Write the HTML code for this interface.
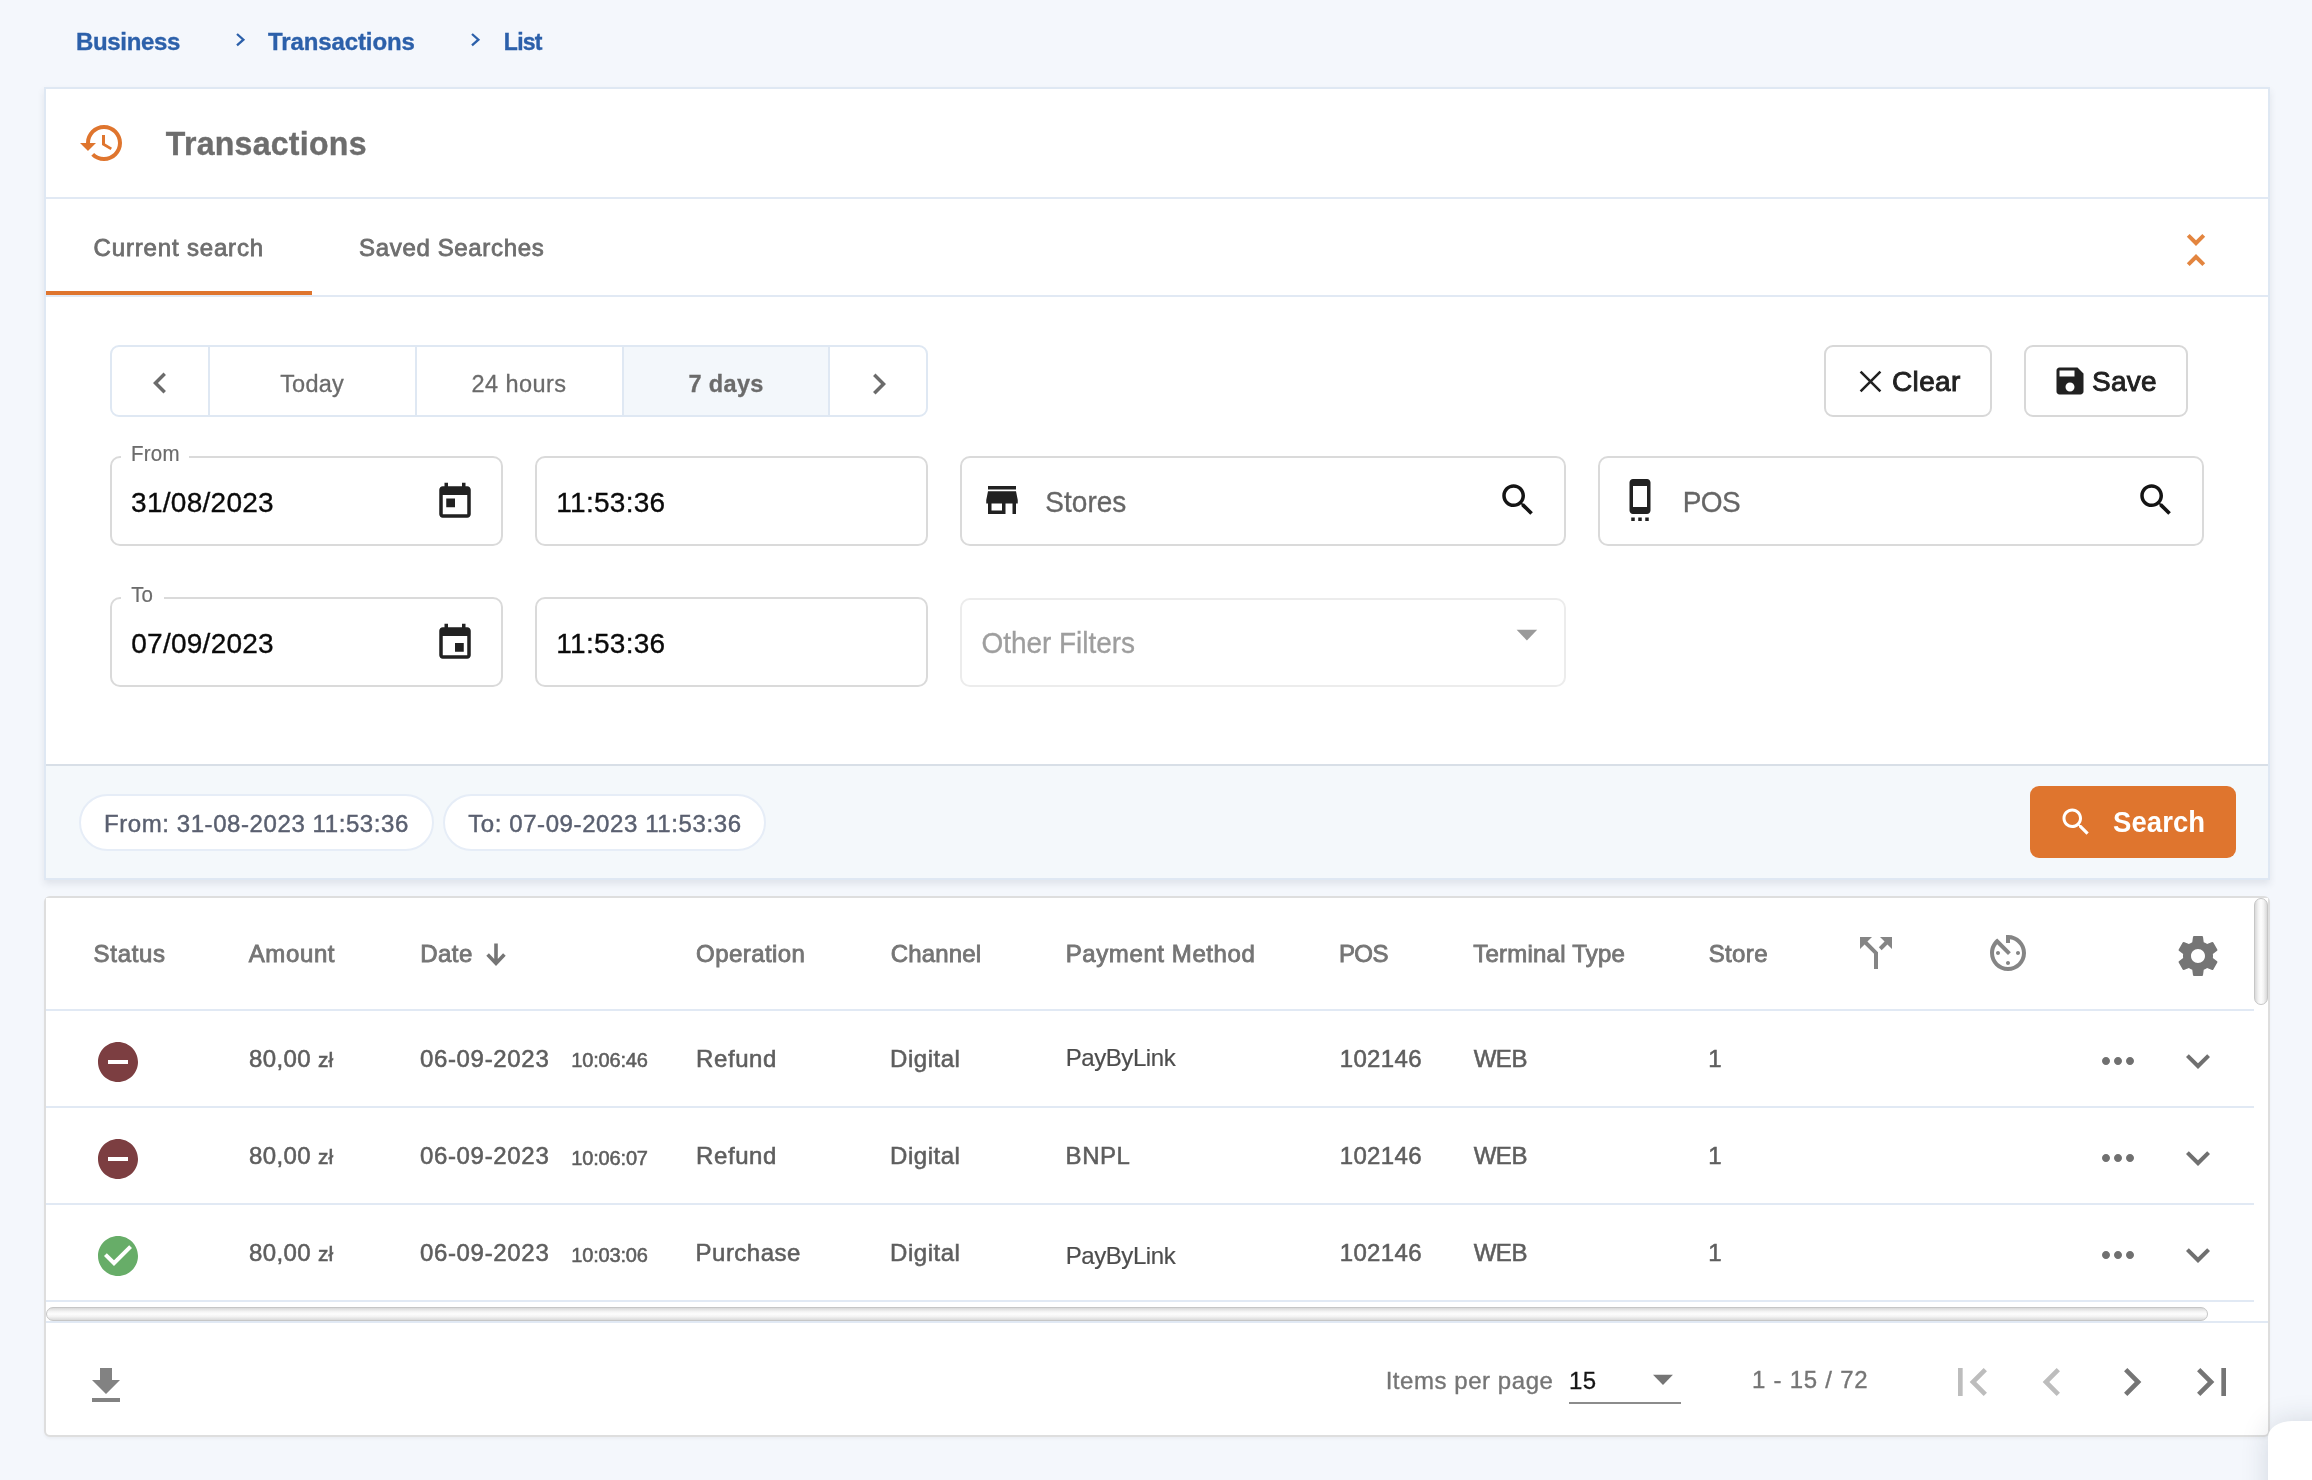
<!DOCTYPE html>
<html lang="en">
<head>
<meta charset="utf-8">
<title>Transactions</title>
<style>
html,body{margin:0;padding:0}
body{width:2312px;height:1480px;overflow:hidden;position:relative;background:#f4f7fc;font-family:"Liberation Sans",sans-serif}
.a,.t,svg{position:absolute}
.t{white-space:pre;line-height:1}
.hl{position:absolute;height:2px;background:#e1e9f4}
.fld{position:absolute;box-sizing:border-box;height:90px;border:2px solid #dadada;border-radius:10px;background:#fff}
.btn{position:absolute;box-sizing:border-box;height:72px;border:2px solid #d8d8d8;border-radius:9px;background:#fff}
.chip{position:absolute;box-sizing:border-box;height:57px;border:2px solid #e6edf7;border-radius:29px;background:#fff}
</style>
</head>
<body>

<!-- ===== search card ===== -->
<div class="a" style="left:44px;top:87px;width:2226px;height:793px;box-sizing:border-box;border:2px solid #dfe8f3;background:#fff;box-shadow:0 4px 7px rgba(50,60,80,.10)"></div>
<div class="hl" style="left:46px;top:197px;width:2222px"></div>
<div class="hl" style="left:46px;top:295px;width:2222px"></div>
<div class="a" style="left:46px;top:291px;width:266px;height:4px;background:#df752e"></div>
<!-- card footer -->
<div class="a" style="left:46px;top:764px;width:2222px;height:114px;box-sizing:border-box;border-top:2px solid #d8dfe7;background:#f4f8fb"></div>

<!-- quick range group -->
<div class="a" style="left:110px;top:345px;width:818px;height:72px;box-sizing:border-box;border:2px solid #dfe8f3;border-radius:9px;background:#fff;overflow:hidden">
  <div class="a" style="left:512px;top:0;width:204px;height:68px;background:#f3f7fb"></div>
  <div class="a" style="left:96px;top:0;width:2px;height:68px;background:#dfe8f3"></div>
  <div class="a" style="left:303px;top:0;width:2px;height:68px;background:#dfe8f3"></div>
  <div class="a" style="left:510px;top:0;width:2px;height:68px;background:#dfe8f3"></div>
  <div class="a" style="left:716px;top:0;width:2px;height:68px;background:#dfe8f3"></div>
</div>

<!-- Clear / Save -->
<div class="btn" style="left:1824px;top:345px;width:168px"></div>
<div class="btn" style="left:2024px;top:345px;width:164px"></div>

<!-- form fields -->
<div class="fld" style="left:110px;top:456px;width:393px"></div>
<div class="a" style="left:121px;top:455px;width:68px;height:4px;background:#fff"></div>
<div class="fld" style="left:535px;top:456px;width:393px"></div>
<div class="fld" style="left:960px;top:456px;width:606px"></div>
<div class="fld" style="left:1598px;top:456px;width:606px"></div>
<div class="fld" style="left:110px;top:597px;width:393px"></div>
<div class="a" style="left:121px;top:596px;width:43px;height:4px;background:#fff"></div>
<div class="fld" style="left:535px;top:597px;width:393px"></div>
<div class="fld" style="left:960px;top:598px;width:606px;height:89px;border-color:#ececec"></div>

<!-- chips -->
<div class="chip" style="left:78.5px;top:793.5px;width:355px"></div>
<div class="chip" style="left:442.5px;top:793.5px;width:323.5px"></div>

<!-- search button -->
<div class="a" style="left:2030px;top:786px;width:206px;height:72px;border-radius:9px;background:#df752e"></div>

<!-- ===== table card ===== -->
<div class="a" style="left:44px;top:896px;width:2226px;height:541px;box-sizing:border-box;border:2px solid #dedede;border-radius:6px;background:#fff;box-shadow:0 2px 3px rgba(0,0,0,.04)"></div>
<div class="a" style="left:46px;top:898px;width:12px;height:12px;background:#fff"></div>
<div class="a" style="left:2256px;top:898px;width:12px;height:12px;background:#fff"></div>
<div class="hl" style="left:46px;top:1009px;width:2208px"></div>
<div class="hl" style="left:46px;top:1106px;width:2208px"></div>
<div class="hl" style="left:46px;top:1203px;width:2208px"></div>
<div class="hl" style="left:46px;top:1300px;width:2208px"></div>
<div class="hl" style="left:46px;top:1321px;width:2222px"></div>
<!-- vertical scrollbar thumb -->
<div class="a" style="left:2254px;top:898px;width:14px;height:107px;box-sizing:border-box;border:1px solid #c6c6c6;border-radius:7px;background:linear-gradient(90deg,#d9d9d9 0%,#f4f4f4 30%,#fdfdfd 50%,#f4f4f4 70%,#d9d9d9 100%)"></div>
<!-- horizontal scrollbar thumb -->
<div class="a" style="left:46px;top:1307px;width:2162px;height:14px;box-sizing:border-box;border:1px solid #c6c6c6;border-radius:7px;background:linear-gradient(180deg,#d9d9d9 0%,#f4f4f4 30%,#fdfdfd 50%,#f4f4f4 70%,#d9d9d9 100%)"></div>
<!-- paginator select underline -->
<div class="a" style="left:1569px;top:1402px;width:112px;height:2px;background:#8c8c8c"></div>

<!-- floating element bottom-right -->
<div class="a" style="left:2268px;top:1421px;width:90px;height:100px;border-radius:24px 0 0 0 / 16px 0 0 0;background:#fff;box-shadow:0 0 28px rgba(30,40,60,.15)"></div>

<svg style="left:78.00px;top:119.00px" width="48" height="48" viewBox="0 0 24 24"><path fill="#df752e" d="M13 3c-4.97 0-9 4.03-9 9H1l3.89 3.89.07.14L9 12H6c0-3.87 3.13-7 7-7s7 3.13 7 7-3.13 7-7 7c-1.93 0-3.68-.79-4.94-2.06l-1.42 1.42C8.27 19.99 10.51 21 13 21c4.97 0 9-4.03 9-9s-4.03-9-9-9zm-1 5v5l4.28 2.54.72-1.21-3.5-2.08V8H12z"/></svg>
<svg style="left:2172.20px;top:226.00px" width="48" height="48" viewBox="0 0 24 24"><path fill="#e3853f" d="M7.41 18.59L8.83 20 12 16.83 15.17 20l1.41-1.41L12 14l-4.59 4.59zm9.18-13.18L15.17 4 12 7.17 8.83 4 7.41 5.41 12 10l4.59-4.59z"/></svg>
<svg style="left:234.00px;top:32.00px" width="14" height="16" viewBox="0 0 14 16"><polyline points="3,2.0 9.4,7.7 3,13.4" fill="none" stroke="#2c60aa" stroke-width="2.3"/></svg>
<svg style="left:468.50px;top:32.00px" width="14" height="16" viewBox="0 0 14 16"><polyline points="3,2.0 9.4,7.7 3,13.4" fill="none" stroke="#2c60aa" stroke-width="2.3"/></svg>
<svg style="left:139.10px;top:362.20px" width="42" height="42" viewBox="0 0 24 24"><path fill="#6b6b6b" d="M15.41 7.41L14 6l-6 6 6 6 1.41-1.41L10.83 12z"/></svg>
<svg style="left:857.50px;top:362.60px" width="42" height="42" viewBox="0 0 24 24"><path fill="#6b6b6b" d="M10 6L8.59 7.41 13.17 12l-4.58 4.59L10 18l6-6z"/></svg>
<svg style="left:1856.00px;top:367.00px" width="30" height="30" viewBox="0 0 30 30"><path d="M4.6,4.6 L24.4,24.4 M24.4,4.6 L4.6,24.4" fill="none" stroke="#212121" stroke-width="2.6"/></svg>
<svg style="left:2052.20px;top:363.00px" width="36" height="36" viewBox="0 0 24 24"><path fill="#212121" d="M17 3H5c-1.11 0-2 .9-2 2v14c0 1.1.89 2 2 2h14c1.1 0 2-.9 2-2V7l-4-4zm-5 16c-1.66 0-3-1.34-3-3s1.34-3 3-3 3 1.34 3 3-1.34 3-3 3zm3-10H5V5h10v4z"/></svg>
<svg style="left:434.15px;top:481.15px" width="42" height="42" viewBox="0 0 24 24"><path fill="#212121" d="M19 3h-1V1h-2v2H8V1H6v2H5c-1.11 0-1.99.9-1.99 2L3 19c0 1.1.89 2 2 2h14c1.1 0 2-.9 2-2V5c0-1.1-.9-2-2-2zm0 16H5V8h14v11zM7 10h5v5H7z"/></svg>
<svg style="left:434.15px;top:622.15px" width="42" height="42" viewBox="0 0 24 24"><path fill="#212121" d="M17 12h-5v5h5v-5zM16 1v2H8V1H6v2H5c-1.11 0-1.99.9-1.99 2L3 19c0 1.1.89 2 2 2h14c1.1 0 2-.9 2-2V5c0-1.1-.9-2-2-2h-1V1h-2zm3 18H5V8h14v11z"/></svg>
<svg style="left:981.25px;top:479.20px" width="42" height="42" viewBox="0 0 24 24"><path fill="#212121" d="M20 4H4v2h16V4zm1 10v-2l-1-5H4l-1 5v2h1v6h10v-6h4v6h2v-6h1zm-9 4H6v-4h6v4z"/></svg>
<svg style="left:1497.15px;top:479.00px" width="42" height="42" viewBox="0 0 24 24"><path fill="#141414" d="M15.5 14h-.79l-.28-.27C15.41 12.59 16 11.11 16 9.5 16 5.91 13.09 3 9.5 3S3 5.91 3 9.5 5.91 16 9.5 16c1.61 0 3.09-.59 4.23-1.57l.27.28v.79l5 4.99L20.49 19l-4.99-5zm-6 0C7.01 14 5 11.99 5 9.5S7.01 5 9.5 5 14 7.01 14 9.5 11.99 14 9.5 14z"/></svg>
<svg style="left:1618.80px;top:478.60px" width="42" height="42" viewBox="0 0 24 24"><path fill="#212121" d="M7 24h2v-2H7v2zm4 0h2v-2h-2v2zm4 0h2v-2h-2v2zM16 .01L8 0C6.9 0 6 .9 6 2v16c0 1.1.9 2 2 2h8c1.1 0 2-.9 2-2V2c0-1.1-.9-1.99-2-1.99zM16 16H8V4h8v12z"/></svg>
<svg style="left:2134.75px;top:479.00px" width="42" height="42" viewBox="0 0 24 24"><path fill="#141414" d="M15.5 14h-.79l-.28-.27C15.41 12.59 16 11.11 16 9.5 16 5.91 13.09 3 9.5 3S3 5.91 3 9.5 5.91 16 9.5 16c1.61 0 3.09-.59 4.23-1.57l.27.28v.79l5 4.99L20.49 19l-4.99-5zm-6 0C7.01 14 5 11.99 5 9.5S7.01 5 9.5 5 14 7.01 14 9.5 11.99 14 9.5 14z"/></svg>
<svg style="left:1514.00px;top:627.00px" width="26" height="16" viewBox="0 0 26 16"><polygon points="2.6,2.8 23.2,2.8 12.9,13.4" fill="#9a9a9a"/></svg>
<svg style="left:2057.60px;top:804.30px" width="36" height="36" viewBox="0 0 24 24"><path fill="#fff" d="M15.5 14h-.79l-.28-.27C15.41 12.59 16 11.11 16 9.5 16 5.91 13.09 3 9.5 3S3 5.91 3 9.5 5.91 16 9.5 16c1.61 0 3.09-.59 4.23-1.57l.27.28v.79l5 4.99L20.49 19l-4.99-5zm-6 0C7.01 14 5 11.99 5 9.5S7.01 5 9.5 5 14 7.01 14 9.5 11.99 14 9.5 14z"/></svg>
<svg style="left:484.00px;top:940.00px" width="24" height="28" viewBox="0 0 24 28"><path d="M12,3.4 V23 M3.6,14.6 L12,23.4 L20.4,14.6" fill="none" stroke="#757575" stroke-width="3.6" stroke-linejoin="miter"/></svg>
<svg style="left:1851.50px;top:929.10px" width="48" height="48" viewBox="0 0 24 24"><path fill="#858585" d="M14 4l2.29 2.29-2.88 2.88 1.42 1.42 2.88-2.88L20 10V4zm-4 0H4v6l2.29-2.29 4.71 4.7V20h2v-8.41l-5.29-5.3z"/></svg>
<svg style="left:1984.30px;top:929.00px" width="48" height="48" viewBox="0 0 24 24"><path fill="#858585" d="M11 17c0 .55.45 1 1 1s1-.45 1-1-.45-1-1-1-1 .45-1 1zm0-14v4h2V5.08c3.39.49 6 3.39 6 6.92 0 3.87-3.13 7-7 7s-7-3.13-7-7c0-1.68.59-3.22 1.58-4.42L12 13l1.41-1.41-6.8-6.8v.02C4.42 6.45 3 9.05 3 12c0 4.97 4.02 9 9 9 4.97 0 9-4.03 9-9s-4.03-9-9-9h-1zm7 9c0-.55-.45-1-1-1s-1 .45-1 1 .45 1 1 1 1-.45 1-1zM6 12c0 .55.45 1 1 1s1-.45 1-1-.45-1-1-1-1 .45-1 1z"/></svg>
<svg style="left:2173.60px;top:931.90px" width="48" height="48" viewBox="0 0 24 24"><path fill="#757575" d="M19.43 12.98c.04-.32.07-.64.07-.98s-.03-.66-.07-.98l2.11-1.65c.19-.15.24-.42.12-.64l-2-3.46c-.12-.22-.39-.3-.61-.22l-2.49 1c-.52-.4-1.08-.73-1.69-.98l-.38-2.65C14.46 2.18 14.25 2 14 2h-4c-.25 0-.46.18-.49.42l-.38 2.65c-.61.25-1.17.59-1.69.98l-2.49-1c-.23-.09-.49 0-.61.22l-2 3.46c-.13.22-.07.49.12.64l2.11 1.65c-.04.32-.07.65-.07.98s.03.66.07.98l-2.11 1.65c-.19.15-.24.42-.12.64l2 3.46c.12.22.39.3.61.22l2.49-1c.52.4 1.08.73 1.69.98l.38 2.65c.03.24.24.42.49.42h4c.25 0 .46-.18.49-.42l.38-2.65c.61-.25 1.17-.59 1.69-.98l2.49 1c.23.09.49 0 .61-.22l2-3.46c.12-.22.07-.49-.12-.64l-2.11-1.65zM12 15.5c-1.93 0-3.5-1.57-3.5-3.5s1.57-3.5 3.5-3.5 3.5 1.57 3.5 3.5-1.57 3.5-3.5 3.5z"/></svg>
<svg style="left:94.00px;top:1038.00px" width="48" height="48" viewBox="0 0 24 24"><path fill="#7c3e41" d="M12 2C6.48 2 2 6.48 2 12s4.48 10 10 10 10-4.48 10-10S17.52 2 12 2zm5 11H7v-2h10v2z"/></svg>
<svg style="left:2093.70px;top:1036.90px" width="48" height="48" viewBox="0 0 24 24"><path fill="#707070" d="M6 10c-1.1 0-2 .9-2 2s.9 2 2 2 2-.9 2-2-.9-2-2-2zm12 0c-1.1 0-2 .9-2 2s.9 2 2 2 2-.9 2-2-.9-2-2-2zm-6 0c-1.1 0-2 .9-2 2s.9 2 2 2 2-.9 2-2-.9-2-2-2z"/></svg>
<svg style="left:2173.90px;top:1036.90px" width="48" height="48" viewBox="0 0 24 24"><path fill="#707070" d="M16.59 8.59L12 13.17 7.41 8.59 6 10l6 6 6-6z"/></svg>
<svg style="left:94.00px;top:1135.00px" width="48" height="48" viewBox="0 0 24 24"><path fill="#7c3e41" d="M12 2C6.48 2 2 6.48 2 12s4.48 10 10 10 10-4.48 10-10S17.52 2 12 2zm5 11H7v-2h10v2z"/></svg>
<svg style="left:2093.70px;top:1133.90px" width="48" height="48" viewBox="0 0 24 24"><path fill="#707070" d="M6 10c-1.1 0-2 .9-2 2s.9 2 2 2 2-.9 2-2-.9-2-2-2zm12 0c-1.1 0-2 .9-2 2s.9 2 2 2 2-.9 2-2-.9-2-2-2zm-6 0c-1.1 0-2 .9-2 2s.9 2 2 2 2-.9 2-2-.9-2-2-2z"/></svg>
<svg style="left:2173.90px;top:1133.90px" width="48" height="48" viewBox="0 0 24 24"><path fill="#707070" d="M16.59 8.59L12 13.17 7.41 8.59 6 10l6 6 6-6z"/></svg>
<svg style="left:94.00px;top:1232.00px" width="48" height="48" viewBox="0 0 24 24"><path fill="#67ad68" d="M12 2C6.48 2 2 6.48 2 12s4.48 10 10 10 10-4.48 10-10S17.52 2 12 2zm-2 15l-5-5 1.41-1.41L10 14.17l7.59-7.59L19 8l-9 9z"/></svg>
<svg style="left:2093.70px;top:1230.90px" width="48" height="48" viewBox="0 0 24 24"><path fill="#707070" d="M6 10c-1.1 0-2 .9-2 2s.9 2 2 2 2-.9 2-2-.9-2-2-2zm12 0c-1.1 0-2 .9-2 2s.9 2 2 2 2-.9 2-2-.9-2-2-2zm-6 0c-1.1 0-2 .9-2 2s.9 2 2 2 2-.9 2-2-.9-2-2-2z"/></svg>
<svg style="left:2173.90px;top:1230.90px" width="48" height="48" viewBox="0 0 24 24"><path fill="#707070" d="M16.59 8.59L12 13.17 7.41 8.59 6 10l6 6 6-6z"/></svg>
<svg style="left:82.10px;top:1361.90px" width="48" height="48" viewBox="0 0 24 24"><path fill="#828282" d="M19 9h-4V3H9v6H5l7 7 7-7zM5 18v2h14v-2H5z"/></svg>
<svg style="left:1650.00px;top:1372.00px" width="26" height="16" viewBox="0 0 26 16"><polygon points="3,2.8 22.9,2.8 13,13" fill="#757575"/></svg>
<svg style="left:1943.90px;top:1353.90px" width="56" height="56" viewBox="0 0 24 24"><path fill="#bdbdbd" d="M18.41 16.59L13.82 12l4.59-4.59L17 6l-6 6 6 6zM6 6h2v12H6z"/></svg>
<svg style="left:2024.20px;top:1353.90px" width="56" height="56" viewBox="0 0 24 24"><path fill="#bdbdbd" d="M15.41 7.41L14 6l-6 6 6 6 1.41-1.41L10.83 12z"/></svg>
<svg style="left:2104.00px;top:1353.90px" width="56" height="56" viewBox="0 0 24 24"><path fill="#757575" d="M10 6L8.59 7.41 13.17 12l-4.58 4.59L10 18l6-6z"/></svg>
<svg style="left:2184.00px;top:1353.90px" width="56" height="56" viewBox="0 0 24 24"><path fill="#757575" d="M5.59 7.41L10.18 12l-4.59 4.59L7 18l6-6-6-6zM16 6h2v12h-2z"/></svg>

<div class="a" style="left:0;top:0;width:2312px;height:1480px;will-change:transform">
<span class="t" style="left:76.09px;top:30.00px;font-size:24px;font-weight:700;color:#2c60aa;letter-spacing:-0.351px;-webkit-text-stroke:0.35px #2c60aa;transform:scaleY(1.03);transform-origin:0 20.00px;">Business</span>
<span class="t" style="left:267.90px;top:30.00px;font-size:24px;font-weight:700;color:#2c60aa;letter-spacing:-0.094px;-webkit-text-stroke:0.35px #2c60aa;transform:scaleY(1.03);transform-origin:0 20.00px;">Transactions</span>
<span class="t" style="left:503.86px;top:31.00px;font-size:23px;font-weight:700;color:#2c60aa;letter-spacing:-0.743px;-webkit-text-stroke:0.35px #2c60aa;transform:scaleY(1.07);transform-origin:0 19.00px;">List</span>
<span class="t" style="left:165.81px;top:127.50px;font-size:32px;font-weight:700;color:#6d6d6d;letter-spacing:0.298px;-webkit-text-stroke:0.4px #6d6d6d;transform:scaleY(1.05);transform-origin:0 27.00px;">Transactions</span>
<span class="t" style="left:93.56px;top:236.25px;font-size:24px;font-weight:400;color:#6e6e6e;letter-spacing:0.832px;-webkit-text-stroke:0.8px #6e6e6e;">Current search</span>
<span class="t" style="left:359.10px;top:236.25px;font-size:24px;font-weight:400;color:#6e6e6e;letter-spacing:0.649px;-webkit-text-stroke:0.8px #6e6e6e;">Saved Searches</span>
<span class="t" style="left:280.15px;top:373.30px;font-size:23.5px;font-weight:400;color:#6b6b6b;letter-spacing:0.214px;-webkit-text-stroke:0.3px #6b6b6b;">Today</span>
<span class="t" style="left:471.58px;top:373.30px;font-size:23.5px;font-weight:400;color:#6b6b6b;letter-spacing:0.410px;-webkit-text-stroke:0.3px #6b6b6b;">24 hours</span>
<span class="t" style="left:688.61px;top:373.10px;font-size:23.5px;font-weight:700;color:#6b6b6b;letter-spacing:0.320px;-webkit-text-stroke:0.3px #6b6b6b;">7 days</span>
<span class="t" style="left:1891.89px;top:368.30px;font-size:28px;font-weight:400;color:#212121;letter-spacing:0.410px;-webkit-text-stroke:0.9px #212121;">Clear</span>
<span class="t" style="left:2092.11px;top:368.30px;font-size:28px;font-weight:400;color:#212121;letter-spacing:0.177px;-webkit-text-stroke:0.9px #212121;">Save</span>
<span class="t" style="left:130.94px;top:444.00px;font-size:20.5px;font-weight:400;color:#6c6c6c;letter-spacing:0.243px;-webkit-text-stroke:0.2px #6c6c6c;transform:scaleY(1.08);transform-origin:0 17.00px;">From</span>
<span class="t" style="left:131.24px;top:585.00px;font-size:20.5px;font-weight:400;color:#6c6c6c;letter-spacing:-0.104px;-webkit-text-stroke:0.2px #6c6c6c;transform:scaleY(1.08);transform-origin:0 17.00px;">To</span>
<span class="t" style="left:131.10px;top:488.80px;font-size:28px;font-weight:400;color:#0a0a0a;letter-spacing:0.273px;-webkit-text-stroke:0.35px #0a0a0a;">31/08/2023</span>
<span class="t" style="left:131.30px;top:629.80px;font-size:28px;font-weight:400;color:#0a0a0a;letter-spacing:0.251px;-webkit-text-stroke:0.35px #0a0a0a;">07/09/2023</span>
<span class="t" style="left:556.37px;top:488.80px;font-size:28px;font-weight:400;color:#0a0a0a;letter-spacing:0.268px;-webkit-text-stroke:0.35px #0a0a0a;">11:53:36</span>
<span class="t" style="left:556.37px;top:629.80px;font-size:28px;font-weight:400;color:#0a0a0a;letter-spacing:0.268px;-webkit-text-stroke:0.35px #0a0a0a;">11:53:36</span>
<span class="t" style="left:1045.31px;top:489.20px;font-size:28px;font-weight:400;color:#666;letter-spacing:0.029px;-webkit-text-stroke:0.3px #666;transform:scaleY(1.05);transform-origin:0 23.00px;">Stores</span>
<span class="t" style="left:1682.72px;top:489.20px;font-size:28px;font-weight:400;color:#666;letter-spacing:-0.621px;-webkit-text-stroke:0.3px #666;transform:scaleY(1.05);transform-origin:0 23.00px;">POS</span>
<span class="t" style="left:981.46px;top:629.90px;font-size:28px;font-weight:400;color:#9e9e9e;letter-spacing:-0.042px;-webkit-text-stroke:0.3px #9e9e9e;transform:scaleY(1.04);transform-origin:0 23.00px;">Other Filters</span>
<span class="t" style="left:103.90px;top:812.00px;font-size:24px;font-weight:400;color:#5a6070;letter-spacing:0.585px;-webkit-text-stroke:0.45px #5a6070;">From: 31-08-2023 11:53:36</span>
<span class="t" style="left:468.13px;top:812.00px;font-size:24px;font-weight:400;color:#5a6070;letter-spacing:0.596px;-webkit-text-stroke:0.45px #5a6070;">To: 07-09-2023 11:53:36</span>
<span class="t" style="left:2113.12px;top:808.80px;font-size:27.5px;font-weight:700;color:#fff;letter-spacing:0.038px;transform:scaleY(1.08);transform-origin:0 23.00px;">Search</span>
<span class="t" style="left:93.56px;top:942.20px;font-size:24px;font-weight:400;color:#757575;letter-spacing:0.702px;-webkit-text-stroke:0.85px #757575;">Status</span>
<span class="t" style="left:248.72px;top:942.20px;font-size:24px;font-weight:400;color:#757575;letter-spacing:0.618px;-webkit-text-stroke:0.85px #757575;">Amount</span>
<span class="t" style="left:420.17px;top:942.20px;font-size:24px;font-weight:400;color:#757575;letter-spacing:0.465px;-webkit-text-stroke:0.85px #757575;">Date</span>
<span class="t" style="left:696.12px;top:942.20px;font-size:24px;font-weight:400;color:#757575;letter-spacing:0.432px;-webkit-text-stroke:0.85px #757575;">Operation</span>
<span class="t" style="left:890.83px;top:942.20px;font-size:24px;font-weight:400;color:#757575;letter-spacing:0.122px;-webkit-text-stroke:0.85px #757575;">Channel</span>
<span class="t" style="left:1065.76px;top:942.20px;font-size:24px;font-weight:400;color:#757575;letter-spacing:0.587px;-webkit-text-stroke:0.85px #757575;">Payment Method</span>
<span class="t" style="left:1338.91px;top:942.20px;font-size:24px;font-weight:400;color:#757575;letter-spacing:-0.566px;-webkit-text-stroke:0.85px #757575;">POS</span>
<span class="t" style="left:1473.29px;top:942.20px;font-size:24px;font-weight:400;color:#757575;letter-spacing:0.215px;-webkit-text-stroke:0.85px #757575;">Terminal Type</span>
<span class="t" style="left:1708.72px;top:942.20px;font-size:24px;font-weight:400;color:#757575;letter-spacing:0.349px;-webkit-text-stroke:0.85px #757575;">Store</span>
<span class="t" style="left:249.08px;top:1047.00px;font-size:24px;font-weight:400;color:#5e5e5e;letter-spacing:0.391px;-webkit-text-stroke:0.55px #5e5e5e;">80,00</span>
<span class="t" style="left:317.98px;top:1049.00px;font-size:21px;font-weight:400;color:#5e5e5e;letter-spacing:-0.084px;-webkit-text-stroke:0.55px #5e5e5e;">zł</span>
<span class="t" style="left:419.89px;top:1047.00px;font-size:24px;font-weight:400;color:#5e5e5e;letter-spacing:0.677px;-webkit-text-stroke:0.55px #5e5e5e;">06-09-2023</span>
<span class="t" style="left:571.31px;top:1050.30px;font-size:20px;font-weight:400;color:#5e5e5e;letter-spacing:-0.181px;-webkit-text-stroke:0.55px #5e5e5e;">10:06:46</span>
<span class="t" style="left:696.08px;top:1047.00px;font-size:24px;font-weight:400;color:#5e5e5e;letter-spacing:0.587px;-webkit-text-stroke:0.55px #5e5e5e;">Refund</span>
<span class="t" style="left:890.07px;top:1047.00px;font-size:24px;font-weight:400;color:#5e5e5e;letter-spacing:0.529px;-webkit-text-stroke:0.55px #5e5e5e;">Digital</span>
<span class="t" style="left:1065.67px;top:1045.80px;font-size:24px;font-weight:400;color:#4d4d4d;letter-spacing:-0.422px;-webkit-text-stroke:0.2px #4d4d4d;">PayByLink</span>
<span class="t" style="left:1339.73px;top:1047.00px;font-size:24px;font-weight:400;color:#5e5e5e;letter-spacing:0.346px;-webkit-text-stroke:0.55px #5e5e5e;">102146</span>
<span class="t" style="left:1473.64px;top:1047.00px;font-size:24px;font-weight:400;color:#5e5e5e;letter-spacing:-0.405px;-webkit-text-stroke:0.55px #5e5e5e;">WEB</span>
<span class="t" style="left:1708.18px;top:1047.00px;font-size:24px;font-weight:400;color:#5e5e5e;letter-spacing:0.000px;-webkit-text-stroke:0.55px #5e5e5e;">1</span>
<span class="t" style="left:249.08px;top:1144.20px;font-size:24px;font-weight:400;color:#5e5e5e;letter-spacing:0.391px;-webkit-text-stroke:0.55px #5e5e5e;">80,00</span>
<span class="t" style="left:317.98px;top:1146.20px;font-size:21px;font-weight:400;color:#5e5e5e;letter-spacing:-0.084px;-webkit-text-stroke:0.55px #5e5e5e;">zł</span>
<span class="t" style="left:419.89px;top:1144.20px;font-size:24px;font-weight:400;color:#5e5e5e;letter-spacing:0.677px;-webkit-text-stroke:0.55px #5e5e5e;">06-09-2023</span>
<span class="t" style="left:571.31px;top:1147.50px;font-size:20px;font-weight:400;color:#5e5e5e;letter-spacing:-0.165px;-webkit-text-stroke:0.55px #5e5e5e;">10:06:07</span>
<span class="t" style="left:696.08px;top:1144.20px;font-size:24px;font-weight:400;color:#5e5e5e;letter-spacing:0.587px;-webkit-text-stroke:0.55px #5e5e5e;">Refund</span>
<span class="t" style="left:890.07px;top:1144.20px;font-size:24px;font-weight:400;color:#5e5e5e;letter-spacing:0.529px;-webkit-text-stroke:0.55px #5e5e5e;">Digital</span>
<span class="t" style="left:1065.62px;top:1144.20px;font-size:24px;font-weight:400;color:#5e5e5e;letter-spacing:0.527px;-webkit-text-stroke:0.55px #5e5e5e;">BNPL</span>
<span class="t" style="left:1339.73px;top:1144.20px;font-size:24px;font-weight:400;color:#5e5e5e;letter-spacing:0.346px;-webkit-text-stroke:0.55px #5e5e5e;">102146</span>
<span class="t" style="left:1473.64px;top:1144.20px;font-size:24px;font-weight:400;color:#5e5e5e;letter-spacing:-0.405px;-webkit-text-stroke:0.55px #5e5e5e;">WEB</span>
<span class="t" style="left:1708.18px;top:1144.20px;font-size:24px;font-weight:400;color:#5e5e5e;letter-spacing:0.000px;-webkit-text-stroke:0.55px #5e5e5e;">1</span>
<span class="t" style="left:249.08px;top:1241.30px;font-size:24px;font-weight:400;color:#5e5e5e;letter-spacing:0.391px;-webkit-text-stroke:0.55px #5e5e5e;">80,00</span>
<span class="t" style="left:317.98px;top:1243.30px;font-size:21px;font-weight:400;color:#5e5e5e;letter-spacing:-0.084px;-webkit-text-stroke:0.55px #5e5e5e;">zł</span>
<span class="t" style="left:419.89px;top:1241.30px;font-size:24px;font-weight:400;color:#5e5e5e;letter-spacing:0.677px;-webkit-text-stroke:0.55px #5e5e5e;">06-09-2023</span>
<span class="t" style="left:571.31px;top:1244.60px;font-size:20px;font-weight:400;color:#5e5e5e;letter-spacing:-0.181px;-webkit-text-stroke:0.55px #5e5e5e;">10:03:06</span>
<span class="t" style="left:695.62px;top:1241.30px;font-size:24px;font-weight:400;color:#5e5e5e;letter-spacing:0.472px;-webkit-text-stroke:0.55px #5e5e5e;">Purchase</span>
<span class="t" style="left:890.07px;top:1241.30px;font-size:24px;font-weight:400;color:#5e5e5e;letter-spacing:0.529px;-webkit-text-stroke:0.55px #5e5e5e;">Digital</span>
<span class="t" style="left:1065.67px;top:1244.10px;font-size:24px;font-weight:400;color:#4d4d4d;letter-spacing:-0.422px;-webkit-text-stroke:0.2px #4d4d4d;">PayByLink</span>
<span class="t" style="left:1339.73px;top:1241.30px;font-size:24px;font-weight:400;color:#5e5e5e;letter-spacing:0.346px;-webkit-text-stroke:0.55px #5e5e5e;">102146</span>
<span class="t" style="left:1473.64px;top:1241.30px;font-size:24px;font-weight:400;color:#5e5e5e;letter-spacing:-0.405px;-webkit-text-stroke:0.55px #5e5e5e;">WEB</span>
<span class="t" style="left:1708.18px;top:1241.30px;font-size:24px;font-weight:400;color:#5e5e5e;letter-spacing:0.000px;-webkit-text-stroke:0.55px #5e5e5e;">1</span>
<span class="t" style="left:1385.64px;top:1368.50px;font-size:24px;font-weight:400;color:#757575;letter-spacing:0.554px;-webkit-text-stroke:0.35px #757575;">Items per page</span>
<span class="t" style="left:1568.94px;top:1368.50px;font-size:24px;font-weight:400;color:#151515;letter-spacing:0.362px;-webkit-text-stroke:0.3px #151515;">15</span>
<span class="t" style="left:1751.94px;top:1368.00px;font-size:24px;font-weight:400;color:#757575;letter-spacing:0.759px;-webkit-text-stroke:0.35px #757575;">1 - 15 / 72</span>
</div>
</body>
</html>
